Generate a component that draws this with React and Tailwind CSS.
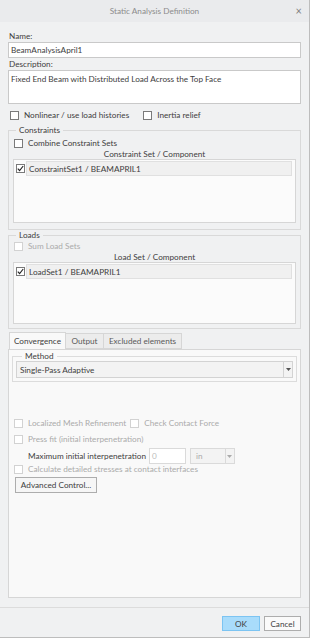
import React from "react";

const Check = ({ checked, disabled, className = "" }) => (
  <span
    className={
      "inline-flex items-center justify-center w-[9px] h-[9px] shrink-0 border bg-white " +
      (disabled ? "border-[#d2d2d2] " : "border-[#7a7a7a] ") +
      className
    }
  >
    {checked && (
      <svg width="7" height="7" viewBox="0 0 7 7">
        <path d="M0.8 3.6 L2.6 5.6 L6.2 1" fill="none" stroke="#222" strokeWidth="1.1" />
      </svg>
    )}
  </span>
);

const CheckRow = ({ label, checked, disabled, className = "" }) => (
  <div className={"flex items-center gap-[5px] h-[10px] " + className}>
    <Check checked={checked} disabled={disabled} />
    <span className={disabled ? "text-[#ababab]" : "text-[#404040]"}>{label}</span>
  </div>
);

const ListBox = ({ label, h }) => (
  <div className={"border border-[#d6d6d6] bg-[#fbfbfb] pt-[1px] pl-[1px] " + h}>
    <div className="flex items-center h-[15px]">
      <Check checked className="ml-[1px]" />
      <div className="ml-[1px] flex-1 mr-[3px] h-[15px] bg-[#f0f0f0] border border-[#e0e0e0] flex items-center pl-[2px] text-[#404040]">
        {label}
      </div>
    </div>
  </div>
);

export default function App() {
  return (
    <div
      className="w-[312px] h-[640px] bg-white text-[8.2px] leading-[10px] text-[#404040]"
      style={{ fontFamily: "Lato, 'Open Sans', sans-serif" }}
    >
      <div className="w-[310px] h-[638px] bg-[#f0f1f2] border-r border-b border-[#bdbdbd] flex flex-col">
        <div className="h-[22px] shrink-0 bg-[#eaebed] flex items-center relative">
          <div className="flex-1 text-center text-[#8c8c8c]">Static Analysis Definition</div>
          <div className="absolute right-[7px] top-[5px] text-[11px] leading-[11px] text-[#808080]">×</div>
        </div>
        <div className="px-[8px] flex flex-col">
          <div className="mt-[9px] h-[10px] leading-[10px] pl-[1px]">Name:</div>
          <div className="mt-[1px] h-[16px] bg-white border border-[#c9c9c9] flex items-center pl-[2px]">BeamAnalysisApril1</div>
          <div className="mt-[1px] h-[10px] leading-[10px] pl-[1px]">Description:</div>
          <div className="mt-[1px] h-[34px] bg-white border border-[#c9c9c9] pl-[2px] pt-[3px]">
            Fixed End Beam with Distributed Load Across the Top Face
          </div>
          <div className="mt-[6px] flex items-center h-[10px] pl-[2px]">
            <CheckRow label="Nonlinear / use load histories" />
            <CheckRow label="Inertia relief" className="ml-[14px]" />
          </div>

          <fieldset className="mt-[5px] border border-[#d9d9d9] px-[4px] pb-[5px] h-[105px]">
            <legend className="ml-[3px] px-[3px] leading-[10px]">Constraints</legend>
            <CheckRow label="Combine Constraint Sets" className="ml-[1px] mt-[3px]" />
            <div className="text-center h-[10px] mt-[1px]">Constraint Set / Component</div>
            <ListBox label="ConstraintSet1 / BEAMAPRIL1" h="h-[64px]" />
          </fieldset>

          <fieldset className="border border-[#d9d9d9] px-[4px] pb-[4px] h-[99px]">
            <legend className="ml-[3px] px-[3px] leading-[10px]">Loads</legend>
            <CheckRow label="Sum Load Sets" disabled className="ml-[1px] mt-[1px]" />
            <div className="text-center h-[10px] mt-[1px]">Load Set / Component</div>
            <ListBox label="LoadSet1 / BEAMAPRIL1" h="h-[62px]" />
          </fieldset>

          <div className="mt-[4px] flex h-[16px] items-end">
            <div className="h-[17px] w-[57px] bg-[#f9f9f9] border border-b-0 border-[#d6d6d6] flex items-center justify-center relative z-10 ml-[1px]">Convergence</div>
            <div className="h-[16px] w-[38px] bg-[#ececec] border border-l-0 border-[#d6d6d6] flex items-center justify-center text-[#5a5a5a]">Output</div>
            <div className="h-[16px] w-[78px] bg-[#ececec] border border-l-0 border-[#d6d6d6] flex items-center justify-center text-[#5a5a5a]">Excluded elements</div>
          </div>
          <div className="h-[249px] bg-[#f9f9f9] border border-[#d6d6d6] px-[3px]">
            <fieldset className="mt-[1px] border border-[#dcdcdc] px-[3px] pb-[3px]">
              <legend className="ml-[6px] px-[3px] leading-[10px]">Method</legend>
              <div className="h-[17px] bg-[#f3f3f3] border border-[#d3d3d3] flex items-center">
                <div className="flex-1 pl-[3px]">Single-Pass Adaptive</div>
                <div className="w-[9px] h-full border-l border-[#d3d3d3] flex items-center justify-center">
                  <svg width="5" height="3" viewBox="0 0 5 3"><path d="M0 0 H5 L2.5 3 Z" fill="#555" /></svg>
                </div>
              </div>
            </fieldset>
            <div className="mt-[36px] flex items-center pl-[2px]">
              <CheckRow label="Localized Mesh Refinement" disabled />
              <CheckRow label="Check Contact Force" disabled className="ml-[4px]" />
            </div>
            <CheckRow label="Press fit (initial interpenetration)" disabled className="mt-[6px] pl-[2px]" />
            <div className="mt-[4px] flex items-center h-[16px] pl-[16px]">
              <span className="text-[#404040]">Maximum initial interpenetration</span>
              <div className="ml-[3px] w-[37px] h-[16px] bg-white border border-[#dadada] flex items-center pl-[2px] text-[#bbb]">0</div>
              <div className="ml-[4px] w-[45px] h-[16px] bg-[#f3f3f3] border border-[#dadada] flex items-center text-[#aaa]">
                <span className="flex-1 pl-[5px]">in</span>
                <span className="w-[9px] h-full border-l border-[#dadada] flex items-center justify-center">
                  <svg width="5" height="3" viewBox="0 0 5 3"><path d="M0 0 H5 L2.5 3 Z" fill="#aaa" /></svg>
                </span>
              </div>
            </div>
            <CheckRow label="Calculate detailed stresses at contact interfaces" disabled className="pl-[2px]" />
            <div className="mt-[3px] ml-[3px] w-[82px] h-[16px] bg-[#f6f6f6] border border-[#adadad] flex items-center justify-center">Advanced Control...</div>
          </div>
          <div className="mt-[9px] border-t border-[#dcdcdc] -mx-[8px]" />
          <div className="mt-[8px] flex justify-end gap-[4px]">
            <div className="w-[38px] h-[15px] bg-[#a9dcfb] border border-[#7cc4f2] flex items-center justify-center">OK</div>
            <div className="w-[37px] h-[15px] bg-[#fafafa] border border-[#adadad] flex items-center justify-center">Cancel</div>
          </div>
        </div>
      </div>
    </div>
  );
}
